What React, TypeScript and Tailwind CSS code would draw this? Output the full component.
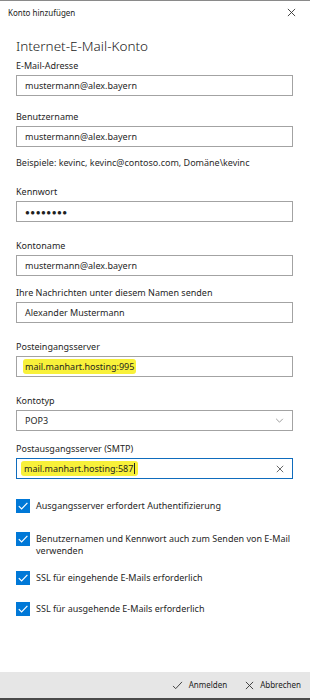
import React from "react";

const font = { fontFamily: '"Noto Sans", "Open Sans", sans-serif' };

function Label({ children, className = "" }: { children: React.ReactNode; className?: string }) {
  return <div className={`h-[14px] text-[9px] leading-[14px] text-[#1f1f1f] ${className}`}>{children}</div>;
}

function Field({
  label,
  value,
  className = "",
}: {
  label: string;
  value: React.ReactNode;
  className?: string;
}) {
  return (
    <div className={className}>
      <Label>{label}</Label>
      <div className="mt-[2px] flex h-[21px] w-[277px] items-center border-[1.5px] border-[#a3a3a3] bg-white pl-[8px] text-[9px] text-[#1f1f1f]">
        {value}
      </div>
    </div>
  );
}

function Check({ children, className = "" }: { children: React.ReactNode; className?: string }) {
  return (
    <div className={`flex items-start gap-[6px] ${className}`}>
      <div className="flex h-[14px] w-[14px] shrink-0 items-center justify-center bg-[#0078d7]">
        <svg viewBox="0 0 14 14" className="h-[14px] w-[14px]">
          <path d="M2.8 7.2 L5.6 10 L11.4 3.8" fill="none" stroke="white" strokeWidth="1.2" />
        </svg>
      </div>
      <div className="whitespace-nowrap pt-px text-[9px] leading-[12px] text-[#1f1f1f]">{children}</div>
    </div>
  );
}

export default function App() {
  return (
    <div className="flex h-[700px] w-[310px] flex-col bg-white" style={font}>
      <div className="h-px bg-[#8a8a8a]" />
      <div className="flex h-[23px] items-center justify-between pl-[8px] pr-[14px]">
        <span className="text-[8px] text-[#222]">Konto hinzufügen</span>
        <svg viewBox="0 0 10 10" className="h-[9px] w-[9px]">
          <path d="M1 1 L9 9 M9 1 L1 9" stroke="#333" strokeWidth="1" />
        </svg>
      </div>
      <div className="flex flex-1 flex-col pl-[16px]">
        <div className="mt-[12px] h-[20px] text-[13.5px] font-light leading-[20px] text-[#1a1a1a]">Internet-E-Mail-Konto</div>
        <Field className="mt-[3px]" label="E-Mail-Adresse" value="mustermann@alex.bayern" />
        <Field className="mt-[14px]" label="Benutzername" value="mustermann@alex.bayern" />
        <div className="mt-[9px] h-[14px] text-[9px] leading-[14px] text-[#2b2b2b]">
          Beispiele: kevinc, kevinc@contoso.com, Domäne\kevinc
        </div>
        <Field
          className="mt-[15px]"
          label="Kennwort"
          value={<span className="text-[8px] tracking-[0.5px]">●●●●●●●●</span>}
        />
        <Field className="mt-[17px]" label="Kontoname" value="mustermann@alex.bayern" />
        <Field className="mt-[10px]" label="Ihre Nachrichten unter diesem Namen senden" value="Alexander Mustermann" />
        <div className="mt-[17px]">
          <Label>Posteingangsserver</Label>
          <div className="mt-[2px] flex h-[21px] w-[277px] items-center border-[1.5px] border-[#a3a3a3] bg-white pl-[6px] text-[9px] text-[#1f1f1f]">
            <span className="rounded-[3px] bg-[#f8f13a] px-[2px] leading-[15px]">mail.manhart.hosting:995</span>
          </div>
        </div>
        <div className="mt-[17px]">
          <Label>Kontotyp</Label>
          <div className="mt-[2px] flex h-[21px] w-[277px] items-center justify-between border-[1.5px] border-[#a3a3a3] bg-white pl-[8px] pr-[8px] text-[9px] text-[#1f1f1f]">
            <span>POP3</span>
            <svg viewBox="0 0 10 6" className="h-[5px] w-[9px]">
              <path d="M1 1 L5 5 L9 1" fill="none" stroke="#8a8a8a" strokeWidth="1" />
            </svg>
          </div>
        </div>
        <div className="mt-[11px]">
          <Label>Postausgangsserver (SMTP)</Label>
          <div className="mt-[2px] flex h-[21px] w-[277px] items-center justify-between border-[1.5px] border-[#0f6cbd] bg-white pl-[4px] pr-[8px] text-[9px] text-[#1f1f1f]">
            <span className="flex items-center rounded-[3px] bg-[#f8f13a] px-[3px] leading-[15px]">
              mail.manhart.hosting:587
              <span className="ml-px inline-block h-[11px] w-px bg-[#222]" />
            </span>
            <svg viewBox="0 0 10 10" className="h-[8px] w-[8px]">
              <path d="M1 1 L9 9 M9 1 L1 9" stroke="#444" strokeWidth="1" />
            </svg>
          </div>
        </div>
        <Check className="mt-[20px]">Ausgangsserver erfordert Authentifizierung</Check>
        <Check className="mt-[19px]">
          Benutzernamen und Kennwort auch zum Senden von E-Mail
          <br />
          verwenden
        </Check>
        <Check className="mt-[14px]">SSL für eingehende E-Mails erforderlich</Check>
        <Check className="mt-[17px]">SSL für ausgehende E-Mails erforderlich</Check>
      </div>
      <div className="flex h-[26px] items-center justify-end gap-[18px] bg-[#e6e6e6] pr-[9px] text-[8px] text-[#222]">
        <div className="flex items-center gap-[6px]">
          <svg viewBox="0 0 12 10" className="h-[9px] w-[11px]">
            <path d="M1 5.5 L4 8.5 L11 1" fill="none" stroke="#333" strokeWidth="1" />
          </svg>
          <span>Anmelden</span>
        </div>
        <div className="flex items-center gap-[6px]">
          <svg viewBox="0 0 10 10" className="h-[9px] w-[9px]">
            <path d="M1 1 L9 9 M9 1 L1 9" stroke="#333" strokeWidth="1" />
          </svg>
          <span>Abbrechen</span>
        </div>
      </div>
      <div className="h-[2px] bg-[#4a4a4a]" />
    </div>
  );
}
